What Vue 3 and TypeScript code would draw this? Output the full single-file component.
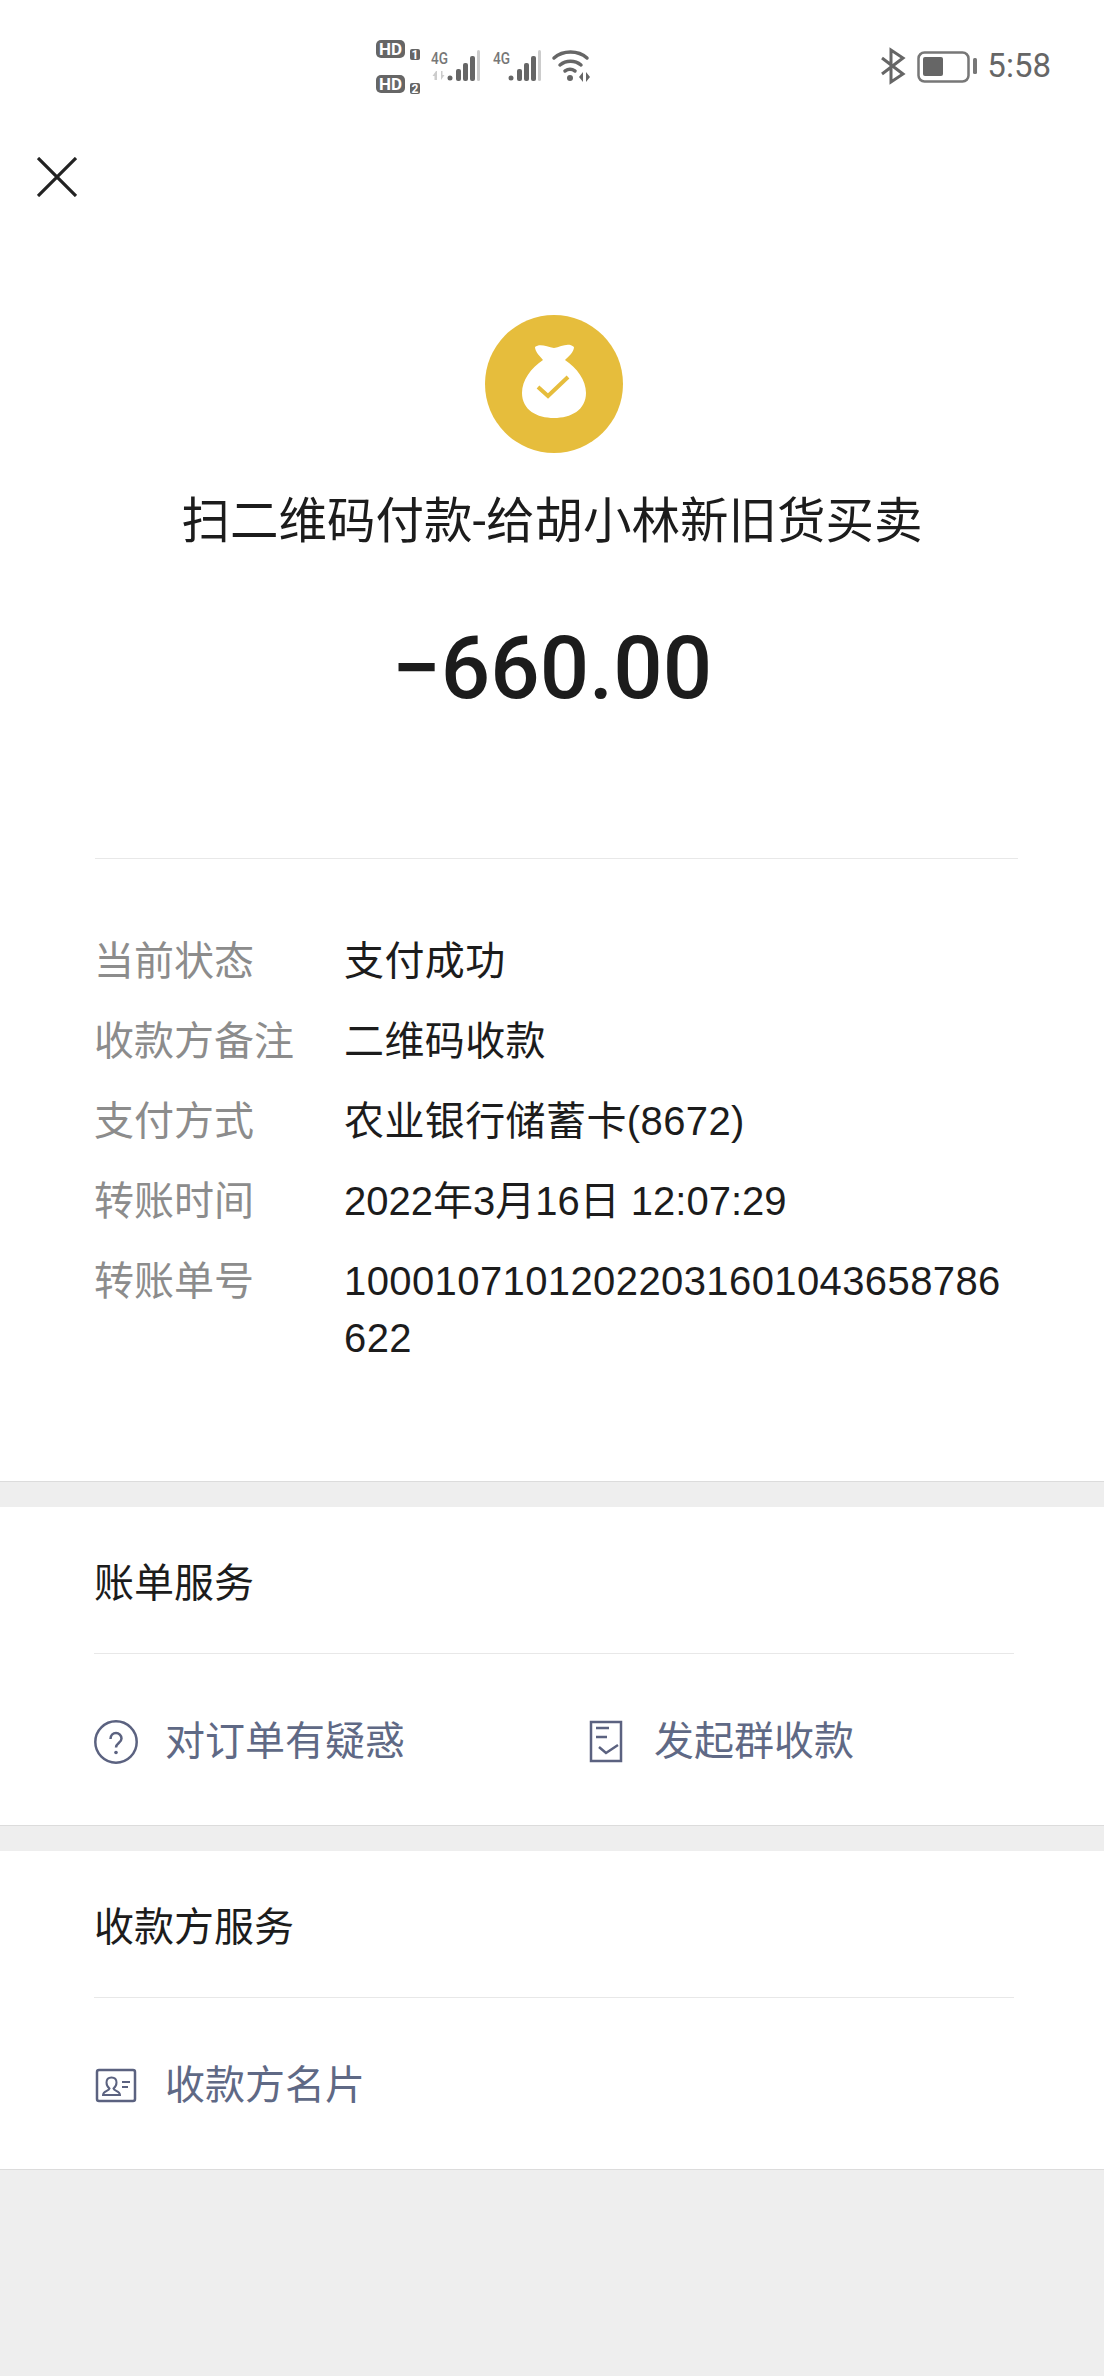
<template>
  <div class="page">
    <!-- Status bar -->
    <div class="status-bar">
      <svg class="net-icons" viewBox="340 20 280 90" width="280" height="90">
        <g fill="#666">
          <rect x="376" y="40" width="29" height="18" rx="5" />
          <rect x="410" y="49" width="10" height="11" rx="2" />
          <rect x="376" y="75" width="29" height="18" rx="5" />
          <rect x="410" y="83" width="10" height="11" rx="2" />
        </g>
        <g font-family="'Roboto', sans-serif" font-weight="700" fill="#fff" text-anchor="middle">
          <text x="390.5" y="55" font-size="17">HD</text>
          <text x="415" y="58.500" font-size="12">1</text>
          <text x="390.5" y="90" font-size="17">HD</text>
          <text x="415" y="93" font-size="12">2</text>
        </g>
        <g font-family="'Roboto', sans-serif" font-weight="500" fill="#777" font-size="16">
          <text x="431" y="63.500" textLength="17" lengthAdjust="spacingAndGlyphs">4G</text>
          <text x="493" y="63.500" textLength="17" lengthAdjust="spacingAndGlyphs">4G</text>
        </g>
        <g fill="#ccc">
          <path d="M436 71l-3.500 5h2v4h2.500v-9zM441 71v9l3.500-5h-2v-4z" />
          <rect x="477" y="50" width="3" height="31" rx="1.5" />
          <rect x="538" y="50" width="3" height="31" rx="1.5" />
        </g>
        <g fill="#666">
          <circle cx="450" cy="78" r="2.500" />
          <rect x="456" y="69" width="5" height="12" rx="2" />
          <rect x="463" y="63" width="5" height="18" rx="2" />
          <rect x="470" y="56" width="5" height="25" rx="2" />
          <circle cx="511" cy="78" r="2.500" />
          <rect x="517" y="69" width="5" height="12" rx="2" />
          <rect x="524" y="63" width="5" height="18" rx="2" />
          <rect x="531" y="56" width="5" height="25" rx="2" />
          <circle cx="570" cy="78" r="3" />
          <path d="M579 77l4-5v10zM586 72l4 5-4 5z" />
        </g>
        <g fill="none" stroke="#666" stroke-width="3.500" stroke-linecap="round">
          <path d="M554 58c9-8 24-8 33 0" />
          <path d="M560 65c6-5 15-5 21 0" />
          <path d="M565 71c3-2 7-2 10 0" />
        </g>
      </svg>
      <div class="status-right">
        <svg viewBox="870 40 112 52" width="112" height="52">
          <path d="M881 58l21 16-12 8V50l12 8-21 16" fill="none" stroke="#666" stroke-width="3" />
          <rect x="917.5" y="52.5" width="50" height="29" rx="6" fill="none" stroke="#777" stroke-width="2.500" />
          <rect x="922" y="57" width="20" height="19" rx="2" fill="#666" />
          <rect x="972" y="58" width="4" height="16" rx="1.500" fill="#777" />
        </svg>
        <span class="time">5:58</span>
      </div>
    </div>

    <!-- Close -->
    <div class="close-row">
      <svg viewBox="0 0 40 40" width="40" height="40">
        <path d="M1 1l38 38M39 1L1 39" fill="none" stroke="#222" stroke-width="3.200" />
      </svg>
    </div>

    <!-- Hero -->
    <div class="hero">
      <svg viewBox="460 300 180 160" width="180" height="160">
        <circle cx="553" cy="384" r="69" fill="#e6bd3c" />
        <path
          d="M534 347C539 343 546 347 553 348C560 347 567 342 573 347C573 352 568 356 564 360C576 368 585 380 585 393C585 410 570 418 553 418C536 418 521 410 521 393C521 380 530 368 542 360C539 356 534 352 534 347Z"
          fill="#fff"
        />
        <path d="M537 387l10 9 20-19" fill="none" stroke="#e6bd3c" stroke-width="4" />
      </svg>
      <div class="title">扫二维码付款-给胡小林新旧货买卖</div>
      <div class="amount">−660.00</div>
    </div>

    <!-- Details -->
    <div class="details">
      <div class="details-rule"></div>
      <div v-for="row in rows" :key="row.label" class="detail-row">
        <div class="detail-label">{{ row.label }}</div>
        <div class="detail-value">{{ row.value }}</div>
      </div>
    </div>

    <!-- Bill services -->
    <section class="service">
      <div class="service-head">账单服务</div>
      <div class="service-links">
        <div class="link link-wide">
          <svg viewBox="0 0 44 44" width="44" height="44">
            <circle cx="22" cy="22" r="20.700" fill="none" stroke="#5b6280" stroke-width="2.500" />
            <path d="M16.500 19c0-3.500 2.500-6 5.500-6s5.500 2.500 5.500 5.500c0 4.500-5.500 4.500-5.500 9" fill="none" stroke="#5b6280" stroke-width="2.500" />
            <circle cx="22" cy="32.500" r="1.800" fill="#5b6280" />
          </svg>
          <span>对订单有疑惑</span>
        </div>
        <div class="link">
          <svg viewBox="0 0 44 44" width="44" height="44">
            <path
              d="M8 2h30v39H8zM13 8h13M13 17h11M16 27l7 6 12-8"
              fill="none"
              stroke="#5b6280"
              stroke-width="2.500"
            />
          </svg>
          <span>发起群收款</span>
        </div>
      </div>
    </section>

    <!-- Payee services -->
    <section class="service">
      <div class="service-head">收款方服务</div>
      <div class="service-links">
        <div class="link">
          <svg viewBox="0 0 44 44" width="44" height="44">
            <rect x="3" y="6" width="38" height="31" rx="2" fill="none" stroke="#5b6280" stroke-width="2.500" />
            <path
              d="M9 31c0-4 6-4 6.500-6.500-2-1.500-3-3.500-3-6 0-3 2-5 5-5s5 2 5 5c0 2.500-1 4.500-3 6 .5 2.500 6.500 2.500 6.500 6.500z"
              fill="none"
              stroke="#5b6280"
              stroke-width="2"
            />
            <path d="M28 18h8M28 23h6" fill="none" stroke="#5b6280" stroke-width="2" />
          </svg>
          <span>收款方名片</span>
        </div>
      </div>
    </section>
  </div>
</template>

<script setup lang="ts">
interface Row {
  label: string
  value: string
}

const rows: Row[] = [
  { label: '当前状态', value: '支付成功' },
  { label: '收款方备注', value: '二维码收款' },
  { label: '支付方式', value: '农业银行储蓄卡(8672)' },
  { label: '转账时间', value: '2022年3月16日 12:07:29' },
  { label: '转账单号', value: '10001071012022031601043658786622' }
]
</script>

<style>
html,
body {
  background: #eeeeee;
}
</style>

<style scoped>
.page {
  width: 1104px;
  height: 2376px;
  overflow: hidden;
  background: #eeeeee;
  font-family: Roboto, "Noto Sans CJK SC", sans-serif;
  color: #1c1c1c;
}

.status-bar {
  display: flex;
  justify-content: space-between;
  align-items: flex-start;
  height: 130px;
  background: #fff;
  padding: 20px 53px 0 340px;
  box-sizing: border-box;
}

.net-icons {
  display: block;
}

.status-right {
  display: flex;
  align-items: center;
  gap: 4px;
  margin-top: 20px;
}

.status-right svg {
  display: block;
}

.time {
  font-size: 33px;
  color: #666;
  line-height: 52px;
}

.close-row {
  background: #fff;
  padding: 27px 0 0 37px;
  height: 70px;
}

.close-row svg {
  display: block;
}

.hero {
  background: #fff;
  display: flex;
  flex-direction: column;
  align-items: center;
  height: 631px;
}

.hero svg {
  display: block;
  margin: 73px 2px 0 0;
}

.title {
  font-size: 48.5px;
  line-height: 66px;
  margin-top: 29px;
}

.amount {
  font-size: 87px;
  font-weight: 500;
  line-height: 100px;
  margin-top: 63px;
}

.details {
  background: #fff;
  padding: 0 90px 114px 94px;
  border-bottom: 1px solid #dcdcdc;
}

.details-rule {
  height: 1px;
  margin: 0 -4px 74px 1px;
  background: #e8e8e8;
}

.detail-row {
  display: flex;
  font-size: 40px;
  line-height: 57px;
  margin-bottom: 23px;
}

.detail-row:last-child {
  margin-bottom: 0;
}

.detail-label {
  width: 250px;
  flex: none;
  color: #8c8c8c;
}

.detail-value {
  flex: 1;
  word-break: break-all;
  font-family: "Liberation Sans", "Noto Sans CJK SC", sans-serif;
  letter-spacing: 0.4px;
}

/* the date row runs a little tighter than the others */
.detail-row:nth-child(5) .detail-value {
  letter-spacing: 0;
}

.service {
  background: #fff;
  margin-top: 25px;
  padding: 0 90px 0 94px;
  border-bottom: 1px solid #dcdcdc;
}

.service-head {
  font-size: 40px;
  height: 147px;
  line-height: 154px;
  box-sizing: border-box;
  border-bottom: 1px solid #e8e8e8;
}

.service-links {
  display: flex;
  height: 171px;
  padding-bottom: 3px;
  box-sizing: border-box;
  align-items: center;
}

.link {
  display: flex;
  align-items: center;
  gap: 27px;
  font-size: 40px;
  color: #5f6985;
}

.link svg {
  display: block;
  margin: 4px 0 -4px;
}

.link-wide {
  width: 489px;
}
</style>
